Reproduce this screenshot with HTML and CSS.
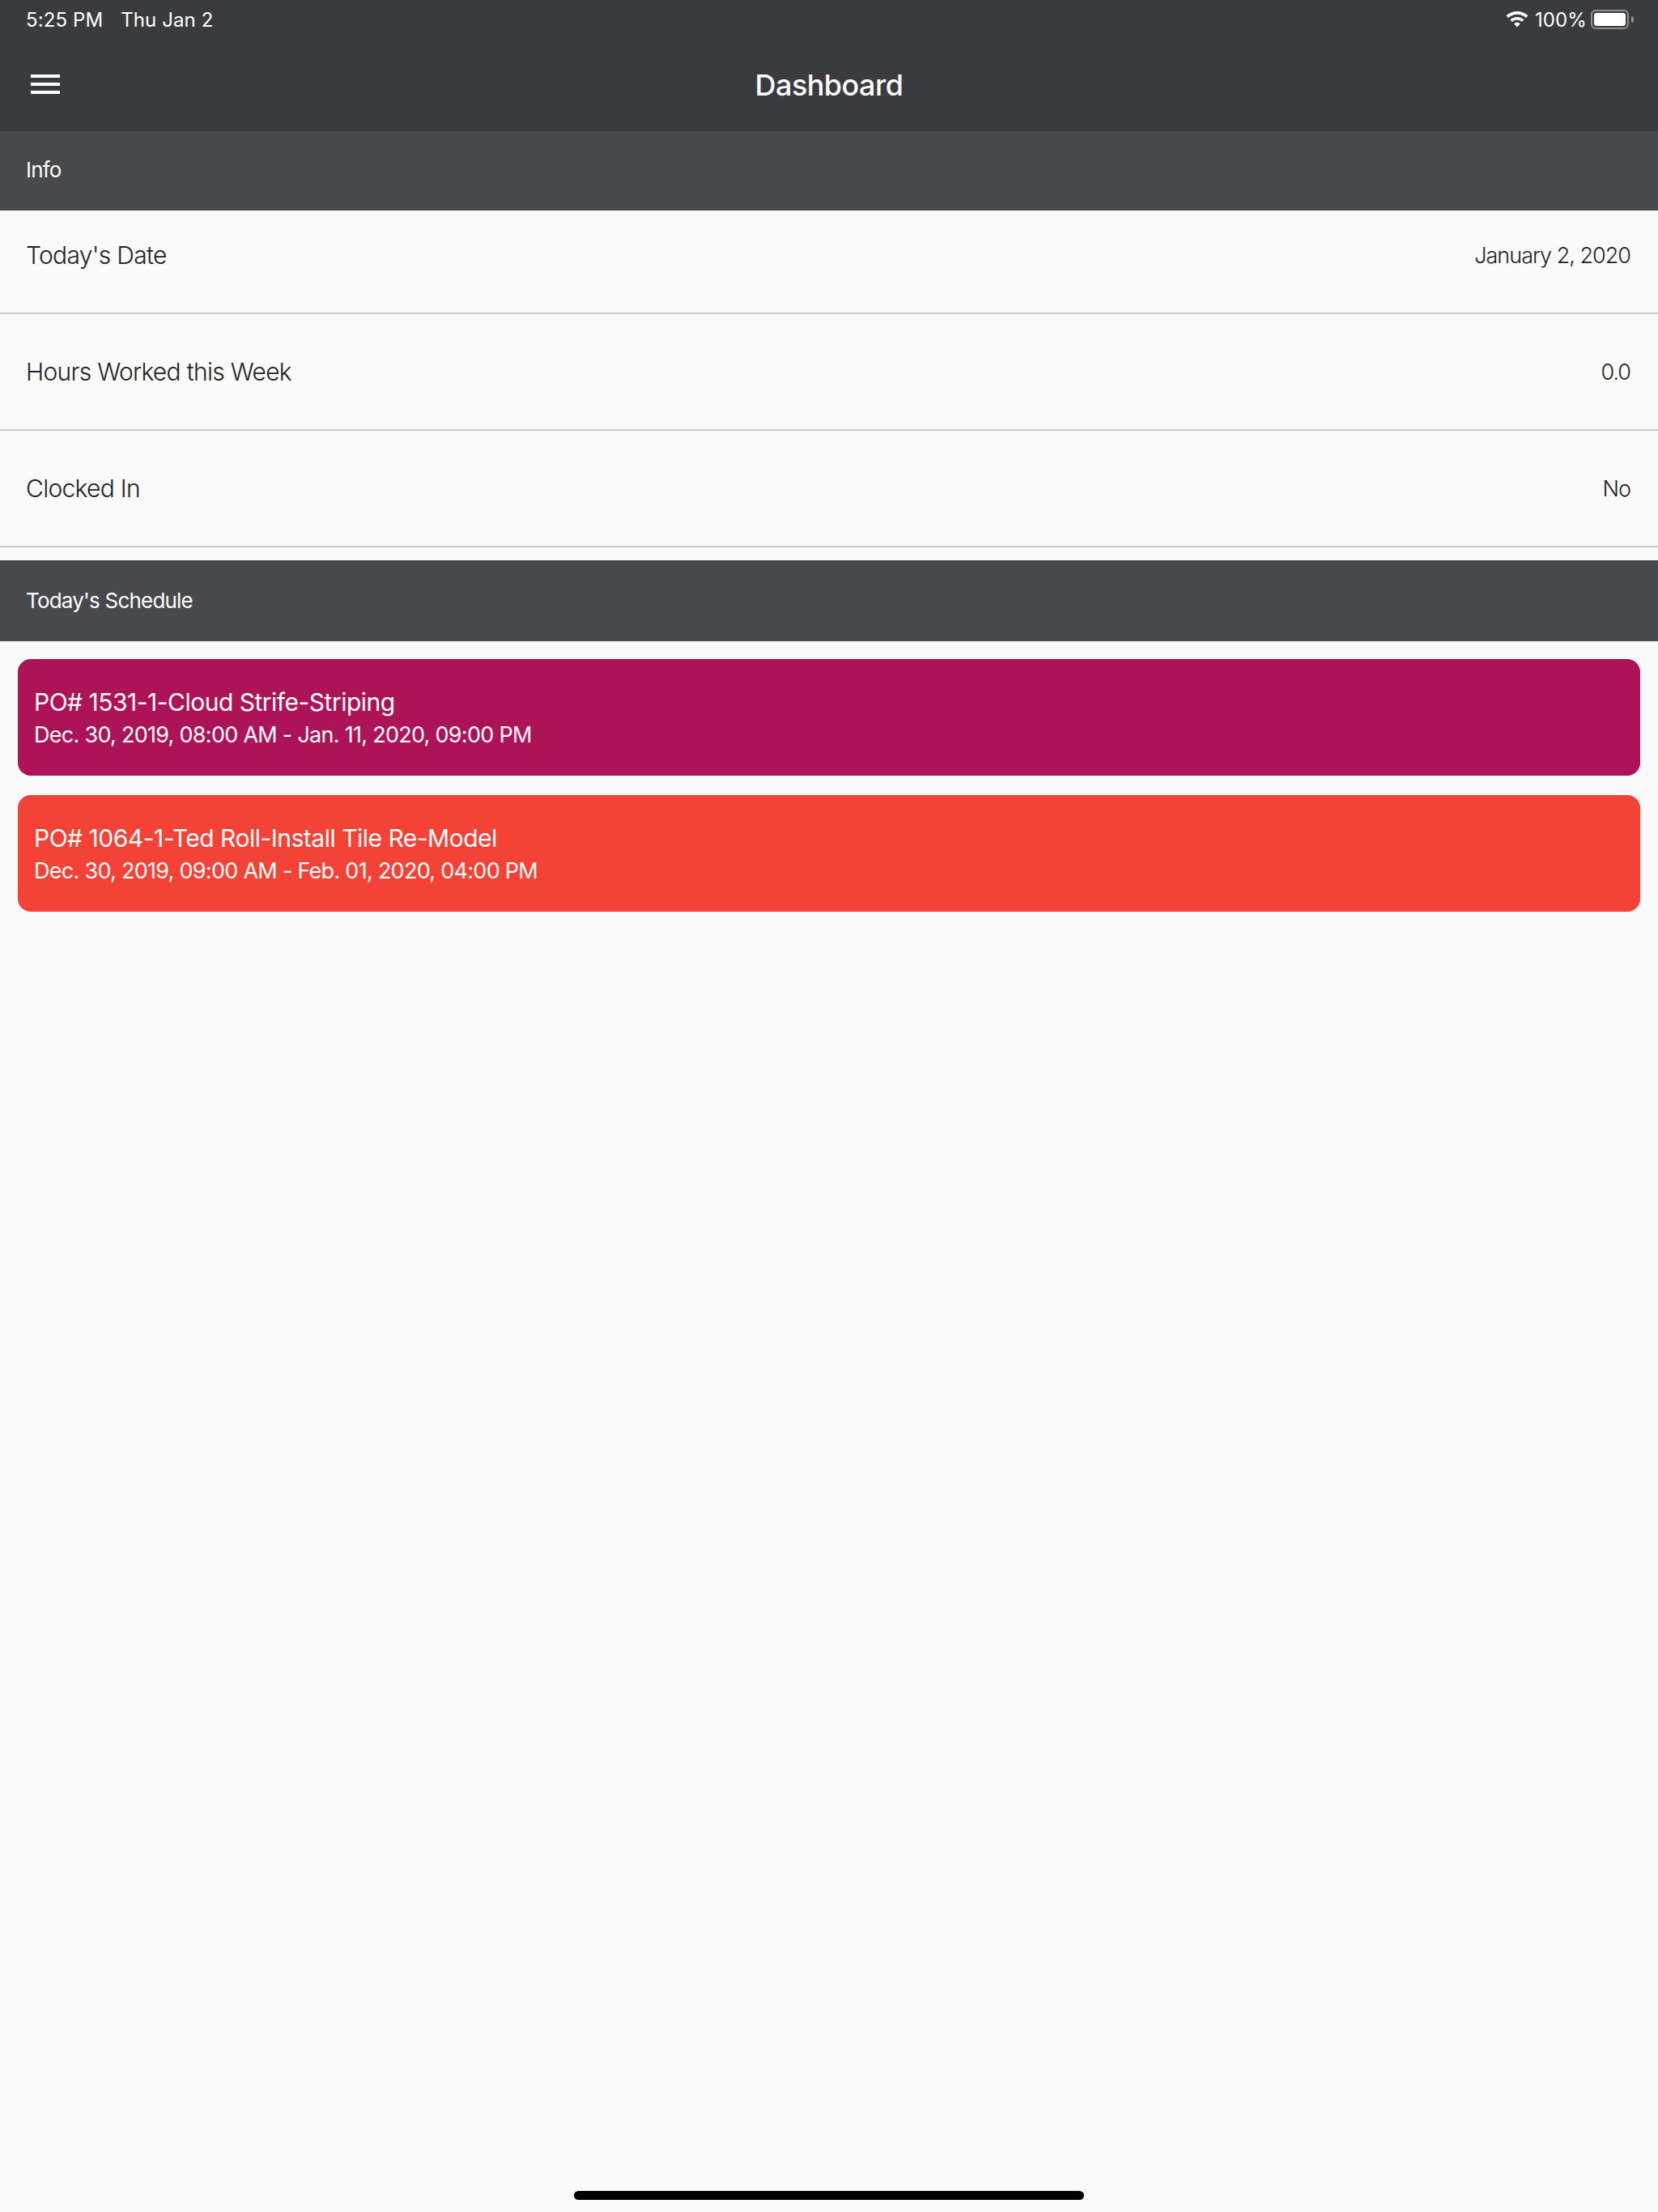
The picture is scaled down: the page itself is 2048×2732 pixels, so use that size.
FILE: index.html
```html
<!DOCTYPE html>
<html lang="en">
<head>
<meta charset="utf-8">
<title>Dashboard</title>
<link rel="stylesheet" href="styles.css">
</head>
<body>
<div class="screen">
  <header class="topbar">
    <div class="status">
      <div class="status-left"><span>5:25 PM</span><span>Thu Jan 2</span></div>
      <div class="status-right">
        <svg class="wifi" viewBox="0 0 28 20" aria-hidden="true"><path d="M14 0C8.800 0 4.200 2 .6 5.300l2.500 2.700C6 5.300 9.800 3.700 14 3.700s8 1.600 10.900 4.300l2.500-2.700C23.800 2 19.200 0 14 0zM14 6.900c-3.300 0-6.300 1.300-8.500 3.300l2.500 2.700c1.600-1.400 3.700-2.300 6-2.300s4.400.9 6 2.300l2.500-2.700c-2.200-2-5.200-3.300-8.500-3.300zM14 13.700c-1.500 0-2.900.6-3.900 1.500L14 19.400l3.900-4.200c-1-.9-2.400-1.500-3.900-1.500z" fill="#fff"/></svg>
        <span class="pct">100%</span>
        <span class="battery"><span class="battery-fill"></span></span>
        <span class="battery-cap"></span>
      </div>
    </div>
    <div class="navbar">
      <button class="menu" aria-label="Menu"><span></span><span></span><span></span></button>
      <h1>Dashboard</h1>
    </div>
  </header>

  <section class="band band-info">Info</section>
  <div class="row row-first"><span class="label">Today's Date</span><span class="value">January 2, 2020</span></div>
  <div class="row"><span class="label">Hours Worked this Week</span><span class="value">0.0</span></div>
  <div class="row"><span class="label">Clocked In</span><span class="value">No</span></div>

  <section class="band band-schedule">Today's Schedule</section>
  <div class="cards">
    <article class="card card-magenta">
      <div class="card-title">PO# 1531-1-Cloud Strife-Striping</div>
      <div class="card-time">Dec. 30, 2019, 08:00 AM - Jan. 11, 2020, 09:00 PM</div>
    </article>
    <article class="card card-red">
      <div class="card-title">PO# 1064-1-Ted Roll-Install Tile Re-Model</div>
      <div class="card-time">Dec. 30, 2019, 09:00 AM - Feb. 01, 2020, 04:00 PM</div>
    </article>
  </div>
  <div class="home-bar"></div>
</div>
</body>
</html>
```
FILE: styles.css
```css
* { box-sizing: border-box; }
html, body { margin: 0; padding: 0; }
body { background: #fafafa; font-family: Inter, "Noto Sans", "Liberation Sans", sans-serif; color: #222; }
.screen { position: relative; width: 2048px; height: 2732px; overflow: hidden; background: #fafafa; }

.topbar { height: 162px; background: #3a3b3f; color: #fff; }
.status { height: 48px; display: flex; justify-content: space-between; align-items: center; padding: 0 30px 0 32px; font-size: 24px; letter-spacing: 0.1px; }
.status-left { display: flex; gap: 22px; }
.status-right { display: flex; align-items: center; }
.wifi { width: 28px; height: 20px; margin-right: 8px; }
.pct { margin-right: 5px; }
.battery { width: 47px; height: 24px; border: 2px solid #8e8f92; border-radius: 6px; padding: 2px; display: block; }
.battery-fill { display: block; height: 100%; background: #fff; border-radius: 3px; }
.battery-cap { width: 3px; height: 8px; margin-left: 3px; background: #8e8f92; border-radius: 0 3px 3px 0; }

.navbar { position: relative; height: 114px; display: flex; align-items: center; justify-content: center; }
.navbar h1 { margin: 0 0 1px; font-size: 36px; font-weight: 500; letter-spacing: -0.55px; }
.menu { position: absolute; left: 38px; top: 44px; width: 36px; height: 24px; padding: 0; background: none; border: 0; display: flex; flex-direction: column; justify-content: space-between; }
.menu span { display: block; height: 4px; background: #fff; }

.band { background: #48494d; color: #fff; font-size: 26px; letter-spacing: -0.8px; display: flex; align-items: center; padding-left: 32px; }
.band-info { height: 98px; padding-bottom: 3px; }
.band-schedule { height: 100px; margin-top: 16px; padding-bottom: 1px; }

.row { height: 144px; padding: 0 34px 0 32px; border-bottom: 2px solid #cccccc; display: flex; justify-content: space-between; align-items: center; }
.row-first { height: 128px; padding-bottom: 16px; }
.label { font-size: 30px; font-weight: 300; letter-spacing: -0.7px; }
.value { font-size: 27px; font-weight: 300; letter-spacing: -1px; }

.cards { display: flex; flex-direction: column; gap: 24px; padding: 22px 22px 0; }
.card { height: 144px; border-radius: 16px; color: #fff; padding: 35px 20px 0; box-shadow: 0 0 1px rgba(200,200,200,.6); }
.card-magenta { background: #ad1457; }
.card-red { background: #f44336; }
.card-title { font-size: 30px; line-height: 36px; letter-spacing: -0.5px; }
.card-time { font-size: 27px; line-height: 36px; letter-spacing: -0.72px; margin-top: 5px; }

.home-bar { position: absolute; left: 709px; top: 2706px; width: 630px; height: 11px; background: #000; border-radius: 6px; }
```
